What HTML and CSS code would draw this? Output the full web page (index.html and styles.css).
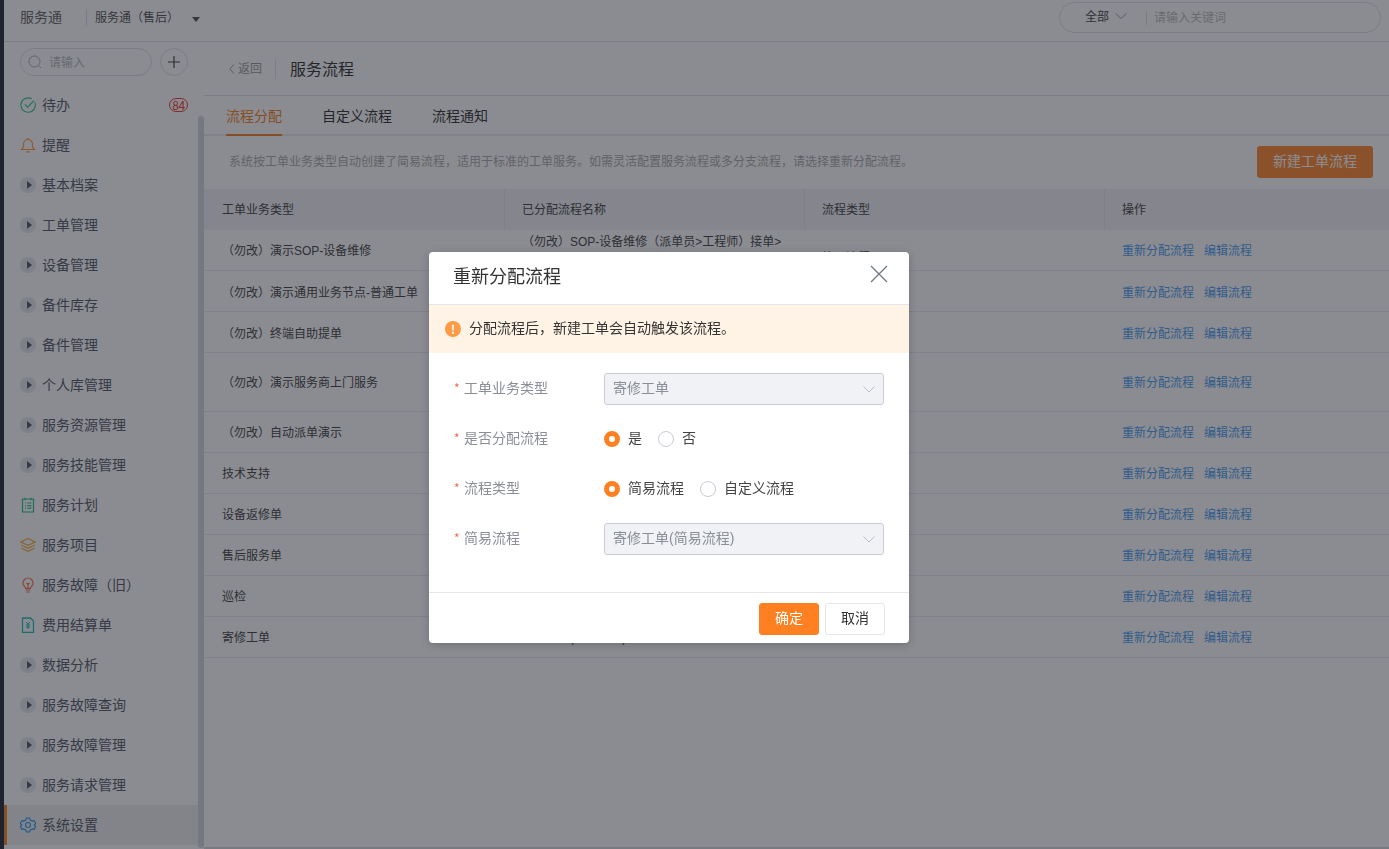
FILE: index.html
```html
<!DOCTYPE html>
<html lang="zh-CN">
<head>
<meta charset="utf-8">
<title>服务流程</title>
<link rel="stylesheet" href="styles.css">
</head>
<body>
<div class="app">
  <div class="strip"></div>
  <div class="shell">
    <header class="topbar">
      <span class="brand">服务通</span>
      <span class="brand-sep"></span>
      <span class="product">服务通（售后）</span>
      <span class="caret"></span>
      <div class="global-search">
        <span class="scope">全部</span>
        <svg class="scope-chev" viewBox="0 0 12 6" width="12" height="6"><path d="M.5.5 6 5.5 11.5.5" fill="none" stroke="#9aa0aa"/></svg>
        <span class="scope-sep"></span>
        <span class="scope-ph">请输入关键词</span>
      </div>
    </header>
    <div class="body">
      <aside class="sidebar">
        <div class="side-tools">
          <div class="side-search">
            <svg viewBox="0 0 14 14" width="14" height="14"><circle cx="6.5" cy="6.5" r="5.5" fill="none" stroke="#a9adb5"/><path d="M10.5 10.5 13 13" stroke="#a9adb5"/></svg>
            <span>请输入</span>
          </div>
          <div class="side-add"><svg viewBox="0 0 12 12" width="12" height="12"><path d="M6 0v12M0 6h12" stroke="#444" stroke-width="1.2"/></svg></div>
        </div>
        <nav class="side-nav">
          <div class="nav-item">
            <svg class="ico" viewBox="0 0 16 16"><path d="M14.8 5.4A7.2 7.2 0 1 1 11.8 1.9" fill="none" stroke="#2fc78a" stroke-width="1.1"/><path d="M4.8 7.4 7.6 10.2 13.800 3.800" fill="none" stroke="#2fc78a" stroke-width="1.2"/></svg>
            <span class="nav-txt">待办</span><span class="badge">84</span>
          </div>
          <div class="nav-item">
            <svg class="ico" viewBox="0 0 16 16"><path d="M1.5 12.5h13l-2-2.500V7a4.500 4.500 0 0 0-9 0v3zM6.300 14.800h3.400M8 1v1.400" fill="none" stroke="#ff9a40" stroke-width="1.200"/></svg>
            <span class="nav-txt">提醒</span>
          </div>
          <div class="nav-item"><i class="tri"></i><span class="nav-txt">基本档案</span></div>
          <div class="nav-item"><i class="tri"></i><span class="nav-txt">工单管理</span></div>
          <div class="nav-item"><i class="tri"></i><span class="nav-txt">设备管理</span></div>
          <div class="nav-item"><i class="tri"></i><span class="nav-txt">备件库存</span></div>
          <div class="nav-item"><i class="tri"></i><span class="nav-txt">备件管理</span></div>
          <div class="nav-item"><i class="tri"></i><span class="nav-txt">个人库管理</span></div>
          <div class="nav-item"><i class="tri"></i><span class="nav-txt">服务资源管理</span></div>
          <div class="nav-item"><i class="tri"></i><span class="nav-txt">服务技能管理</span></div>
          <div class="nav-item">
            <svg class="ico" viewBox="0 0 16 16"><path d="M2.500 2h11v13h-11zM5 .8v2.400M11 .8v2.400M5 6h1M7.400 6h4M5 8.600h1M7.400 8.600h4M5 11.200h1M7.400 11.200h4" fill="none" stroke="#27c07f" stroke-width="1.200"/></svg>
            <span class="nav-txt">服务计划</span>
          </div>
          <div class="nav-item">
            <svg class="ico" viewBox="0 0 16 16"><path d="M8 1.500 15 5 8 8.400 1 5zM1.200 8 8 11.400 14.800 8M1.200 11 8 14.400 14.800 11" fill="none" stroke="#f0b040" stroke-width="1.200"/></svg>
            <span class="nav-txt">服务项目</span>
          </div>
          <div class="nav-item">
            <svg class="ico" viewBox="0 0 16 16"><path d="M5.600 11.400C5.400 9.800 3 9 3 6a5 5 0 0 1 10 0c0 3-2.400 3.800-2.600 5.400zM5.600 13h4.800M6.200 15h3.600M6.500 6 8 7.500 9.500 6M8 7.500v3.500" fill="none" stroke="#f5755a" stroke-width="1.200"/></svg>
            <span class="nav-txt">服务故障（旧）</span>
          </div>
          <div class="nav-item">
            <svg class="ico" viewBox="0 0 16 16"><path d="M2.500 1h8l3 3v11.500h-11z" fill="none" stroke="#1fbfb0" stroke-width="1.300"/><path d="M6 5 8 7 10 5M5.800 8h4.400M5.800 10h4.400M8 7v5" fill="none" stroke="#1fbfb0"/></svg>
            <span class="nav-txt">费用结算单</span>
          </div>
          <div class="nav-item"><i class="tri"></i><span class="nav-txt">数据分析</span></div>
          <div class="nav-item"><i class="tri"></i><span class="nav-txt">服务故障查询</span></div>
          <div class="nav-item"><i class="tri"></i><span class="nav-txt">服务故障管理</span></div>
          <div class="nav-item"><i class="tri"></i><span class="nav-txt">服务请求管理</span></div>
          <div class="nav-item active">
            <svg class="ico" viewBox="0 0 16 16"><path d="M6.400 1H9.600L10.200 3 12.100 4.100 14.100 3.600 15.700 6.400 14.200 8 15.700 9.600 14.100 12.400 12.100 11.900 10.200 13 9.600 15H6.400L5.800 13 3.900 11.900 1.900 12.400 .3 9.600 1.800 8 .3 6.400 1.900 3.600 3.900 4.100 5.800 3Z" fill="none" stroke="#2d9cf0" stroke-width="1.100" stroke-linejoin="round"/><circle cx="8" cy="8" r="2.500" fill="none" stroke="#2d9cf0" stroke-width="1.100"/></svg>
            <span class="nav-txt">系统设置</span>
          </div>
        </nav>
        <div class="side-scroll"></div>
      </aside>
      <main class="main">
        <div class="page-head">
          <svg class="back-chev" viewBox="0 0 6 10" width="6" height="10"><path d="M5 .5.8 5 5 9.500" fill="none" stroke="#999"/></svg>
          <span class="back">返回</span>
          <span class="head-sep"></span>
          <h1 class="page-title">服务流程</h1>
        </div>
        <div class="tabs">
          <span class="tab on">流程分配</span>
          <span class="tab">自定义流程</span>
          <span class="tab">流程通知</span>
        </div>
        <div class="info-row">
          <p class="info">系统按工单业务类型自动创建了简易流程，适用于标准的工单服务。如需灵活配置服务流程或多分支流程，请选择重新分配流程。</p>
          <button class="new-btn">新建工单流程</button>
        </div>
        <div class="tbl">
          <div class="tr th">
            <div class="td">工单业务类型</div><div class="td">已分配流程名称</div><div class="td">流程类型</div><div class="td">操作</div>
          </div>
          <div class="tr">
            <div class="td">（勿改）演示SOP-设备维修</div><div class="td">（勿改）SOP-设备维修（派单员&gt;工程师）接单&gt;<br>处理&gt;完成</div><div class="td low">简易流程</div>
            <div class="td ops"><a>重新分配流程</a><a>编辑流程</a></div>
          </div>
          <div class="tr nudge">
            <div class="td">（勿改）演示通用业务节点-普通工单</div><div class="td">（勿改）通用业务节点</div><div class="td">自定义流程</div>
            <div class="td ops"><a>重新分配流程</a><a>编辑流程</a></div>
          </div>
          <div class="tr nudge">
            <div class="td">（勿改）终端自助提单</div><div class="td">（勿改）终端自助提单</div><div class="td">自定义流程</div>
            <div class="td ops"><a>重新分配流程</a><a>编辑流程</a></div>
          </div>
          <div class="tr tall">
            <div class="td">（勿改）演示服务商上门服务</div><div class="td">（勿改）服务商上门服务</div><div class="td">自定义流程</div>
            <div class="td ops"><a>重新分配流程</a><a>编辑流程</a></div>
          </div>
          <div class="tr">
            <div class="td">（勿改）自动派单演示</div><div class="td">（勿改）自动派单</div><div class="td">自定义流程</div>
            <div class="td ops"><a>重新分配流程</a><a>编辑流程</a></div>
          </div>
          <div class="tr">
            <div class="td">技术支持</div><div class="td">技术支持(简易流程)</div><div class="td">简易流程</div>
            <div class="td ops"><a>重新分配流程</a><a>编辑流程</a></div>
          </div>
          <div class="tr">
            <div class="td">设备返修单</div><div class="td">设备返修单(简易流程)</div><div class="td">简易流程</div>
            <div class="td ops"><a>重新分配流程</a><a>编辑流程</a></div>
          </div>
          <div class="tr">
            <div class="td">售后服务单</div><div class="td">售后服务单(简易流程)</div><div class="td">简易流程</div>
            <div class="td ops"><a>重新分配流程</a><a>编辑流程</a></div>
          </div>
          <div class="tr">
            <div class="td">巡检</div><div class="td">巡检(简易流程)</div><div class="td">简易流程</div>
            <div class="td ops"><a>重新分配流程</a><a>编辑流程</a></div>
          </div>
          <div class="tr">
            <div class="td">寄修工单</div><div class="td">寄修工单(简易流程)</div><div class="td">简易流程</div>
            <div class="td ops"><a>重新分配流程</a><a>编辑流程</a></div>
          </div>
        </div>
      </main>
    </div>
  </div>
</div>

<div class="overlay">
  <section class="modal">
    <div class="modal-head">
      <h2 class="modal-title">重新分配流程</h2>
      <svg class="modal-close" viewBox="0 0 18 18" width="18" height="18"><path d="M1 1l16 16M17 1 1 17" stroke="#6f7786" stroke-width="1.300"/></svg>
    </div>
    <div class="alert">
      <span class="alert-ico">!</span>
      <span class="alert-txt">分配流程后，新建工单会自动触发该流程。</span>
    </div>
    <div class="form">
      <div class="field">
        <label class="lbl"><em>*</em>工单业务类型</label>
        <div class="sel"><span>寄修工单</span><svg viewBox="0 0 12 7" width="12" height="7"><path d="M.5.500 6 6 11.500.500" fill="none" stroke="#b9bec8"/></svg></div>
      </div>
      <div class="field">
        <label class="lbl"><em>*</em>是否分配流程</label>
        <div class="radios"><span class="radio on"></span><span class="rtxt">是</span><span class="radio"></span><span class="rtxt">否</span></div>
      </div>
      <div class="field">
        <label class="lbl"><em>*</em>流程类型</label>
        <div class="radios"><span class="radio on"></span><span class="rtxt">简易流程</span><span class="radio"></span><span class="rtxt">自定义流程</span></div>
      </div>
      <div class="field">
        <label class="lbl"><em>*</em>简易流程</label>
        <div class="sel"><span>寄修工单(简易流程)</span><svg viewBox="0 0 12 7" width="12" height="7"><path d="M.5.500 6 6 11.500.500" fill="none" stroke="#b9bec8"/></svg></div>
      </div>
    </div>
    <div class="modal-foot">
      <button class="btn primary">确定</button>
      <button class="btn">取消</button>
    </div>
  </section>
</div>
</body>
</html>
```

FILE: styles.css
```css
* { box-sizing: border-box; }
html, body { margin: 0; height: 100%; overflow: hidden; }
body {
  font-family: "Noto Sans CJK SC", "Noto Sans", sans-serif;
  font-size: 12px;
  color: #333;
  background: #fff;
}
.app { display: flex; height: 100vh; }
.strip { width: 4px; flex: none; background: #252c3a; }
.shell { flex: 1; min-width: 0; display: flex; flex-direction: column; }

.topbar {
  height: 42px; flex: none; display: flex; align-items: center;
  padding: 0 8px 8px 16px; border-bottom: 1px solid #e0e2e6;
}
.brand { font-size: 14px; color: #666; width: 66px; margin-bottom: 2px; }
.brand-sep { width: 1px; height: 16px; background: #ddd; }
.product { font-size: 12px; color: #555; margin-left: 8px; width: 97px; }
.caret { width: 0; height: 0; border: 4.500px solid transparent; border-top: 5px solid #555; border-bottom: 0; margin-top: 5px; }
.global-search {
  margin-left: auto; width: 322px; height: 31px; border: 1px solid #e0e2e6; border-radius: 16px;
  display: flex; align-items: center; padding-left: 25px; margin-top: 2px;
}
.scope { font-size: 12px; color: #444; margin-bottom: 4px; }
.scope-chev { margin-left: 6px; margin-bottom: 3px; }
.scope-sep { width: 1px; height: 14px; background: #ddd; margin-left: 19px; }
.scope-ph { font-size: 12px; color: #bbb; margin-left: 7px; margin-bottom: 2px; }

.body { flex: 1; min-height: 0; display: flex; }
.sidebar { width: 200px; flex: none; position: relative; overflow: hidden; }
.side-tools { display: flex; align-items: center; gap: 8px; padding: 6px 0 0 16px; }
.side-search {
  width: 132px; height: 28px; border: 1px solid #dcdfe4; border-radius: 14px;
  display: flex; align-items: center; gap: 7px; padding-left: 7px; color: #b5b8be; font-size: 12px;
}
.side-search span { margin-bottom: 2px; }
.side-add { width: 28px; height: 28px; border: 1px solid #dcdfe4; border-radius: 50%; display: flex; align-items: center; justify-content: center; }
.side-nav { margin-top: 9px; }
.nav-item {
  height: 40px; display: flex; align-items: center; gap: 6px; padding-left: 16px; padding-right: 16px;
  font-size: 14px; color: #555a68;
}
.nav-txt { margin-bottom: 2px; }
.nav-item.active { background: #eceef1; border-left: 3px solid #f58220; padding-left: 13px; }
.ico { width: 16px; height: 16px; flex: none; }
.tri {
  width: 16px; height: 16px; flex: none; border-radius: 50%; background: #e6e9ef;
  display: flex; align-items: center; justify-content: center;
}
.tri::after { content: ""; border-left: 5px solid #555b6a; border-top: 4.500px solid transparent; border-bottom: 4.500px solid transparent; margin-left: 2px; }
.badge {
  margin-left: auto; width: 19px; height: 14px; border: 1px solid #ee3a3a; border-radius: 7px; color: #ee3a3a;
  font-size: 12px; line-height: 12px; text-align: center; letter-spacing: -.5px;
}
.side-scroll { position: absolute; right: 0; top: 74px; bottom: 1px; width: 6px; border-radius: 3px; background: #d2d6dd; }

.main { flex: 1; min-width: 0; border-bottom: 2px solid #d9dbe0; }
.page-head { height: 54px; display: flex; align-items: center; padding-left: 25px; border-bottom: 1px solid #e0e2e6; }
.back { font-size: 12px; color: #999; margin-left: 3px; margin-bottom: 2px; }
.head-sep { width: 1px; height: 20px; background: #e0e2e6; margin-left: 13px; }
.page-title { margin: 0 0 2px 14px; font-size: 16px; font-weight: 400; color: #333; }
.tabs { height: 40px; display: flex; gap: 40px; padding-left: 22px; border-bottom: 2px solid #e8eaee; }
.tab { height: 40px; line-height: 38px; font-size: 14px; color: #333; }
.tab.on { color: #f58220; border-bottom: 2px solid #f58220; }
.info-row { height: 53px; display: flex; align-items: center; justify-content: space-between; padding: 0 16px 1px 25px; }
.info { margin: 0 0 3px; font-size: 12px; color: #aaa; }
.new-btn {
  width: 116px; height: 32px; border: 0; border-radius: 3px; background: #ff8020; color: #fff;
  font: inherit; font-size: 14px; padding: 0 0 4px; opacity: .92;
}
.tr {
  display: grid; grid-template-columns: 300px 300px 300px 1fr; height: 41px; align-items: center;
  border-bottom: 1px solid #e8eaee;
}
.tr.tall { height: 59px; }
.th { background: #f2f3f6; border-bottom: 0; }
.td {
  padding: 2px 0 0 18px; font-family: "Liberation Sans", "Noto Sans CJK SC", sans-serif;
  font-size: 12px; line-height: 18px; color: #444; white-space: nowrap;
}
.th .td { height: 100%; display: flex; align-items: center; border-left: 1px solid #e4e6ea; color: #444; padding: 1px 0 0 17px; }
.th .td:first-child { border-left: 0; padding-left: 18px; }
.nudge .td { padding-top: 4px; }
.td.low { padding-top: 16px; }
.ops { display: flex; gap: 10px; }
.ops a { color: #4a9ef0; }

.overlay {
  position: fixed; inset: 0; background: rgba(23, 26, 35, .5);
  display: flex; justify-content: center; align-items: flex-start; padding: 252px 51px 0 0;
}
.modal { width: 480px; height: 391px; background: #fff; border-radius: 4px; box-shadow: 0 2px 8px rgba(0, 0, 0, .2); display: flex; flex-direction: column; }
.modal-head { height: 53px; flex: none; display: flex; align-items: center; justify-content: space-between; padding: 0 21px 2px 24px; border-bottom: 1px solid #e4e6ec; }
.modal-title { margin: 0 0 4px; font-size: 18px; font-weight: 400; color: #333; }
.modal-close { margin-bottom: 7px; }
.alert {
  height: 48px; flex: none; display: flex; align-items: center; gap: 8px; padding-left: 16px;
  background: #fff3e6; border-radius: 0 0 4px 4px; font-size: 14px; color: #333;
}
.alert-txt { margin-bottom: 4px; }
.alert-ico {
  width: 16px; height: 16px; border-radius: 50%; background: #ff9a45; color: #fff; font-size: 12px;
  font-weight: 700; line-height: 16px; text-align: center;
}
.form { flex: 1; padding-top: 20px; }
.field { height: 32px; margin-bottom: 18px; display: flex; align-items: center; }
.lbl { width: 175px; padding: 0 0 4px 25px; font-size: 14px; color: #8a8e96; display: flex; align-items: center; }
.lbl em { color: #f56a4a; font-style: normal; font-size: 12px; width: 10px; }
.sel {
  width: 280px; height: 32px; border: 1px solid #c9ccd4; border-radius: 3px; background: #f1f2f5;
  display: flex; align-items: center; justify-content: space-between; padding: 0 8px; font-size: 14px; color: #8a8e96;
}
.sel span { font-family: "Liberation Sans", "Noto Sans CJK SC", sans-serif; line-height: 20px; margin-bottom: 2px; }
.radios { display: flex; align-items: center; font-size: 14px; color: #444; }
.radio { width: 16px; height: 16px; border: 1px solid #c9ccd4; border-radius: 50%; background: #fff; }
.radio.on { border: 5px solid #ff8020; }
.rtxt { margin: 0 16px 4px 8px; }
.modal-foot { height: 51px; flex: none; display: flex; justify-content: flex-end; gap: 6px; padding: 10px 24px 0 0; border-top: 1px solid #e4e6ec; }
.btn {
  width: 60px; height: 32px; border: 1px solid #e4e6ec; border-radius: 3px; background: #fff; color: #333;
  font: inherit; font-size: 14px; padding: 0 0 4px;
}
.btn.primary { background: #ff8020; border-color: #ff8020; color: #fff; }
```
